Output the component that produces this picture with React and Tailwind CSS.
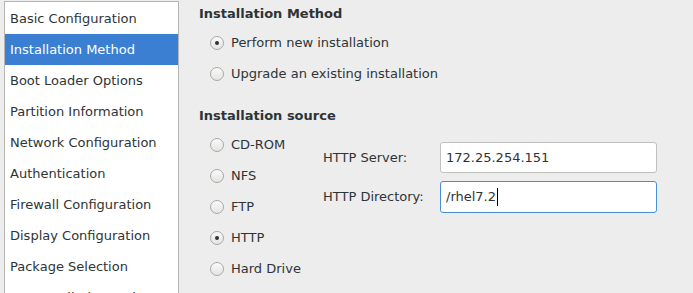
import React, { useState } from 'react';

const sections = [
  'Basic Configuration',
  'Installation Method',
  'Boot Loader Options',
  'Partition Information',
  'Network Configuration',
  'Authentication',
  'Firewall Configuration',
  'Display Configuration',
  'Package Selection',
  'Pre-Installation Script',
];

const sources = ['CD-ROM', 'NFS', 'FTP', 'HTTP', 'Hard Drive'];

const Radio = ({ checked, label, onClick }) => (
  <button onClick={onClick} className="flex items-center h-[31px] text-left">
    <span className="w-[14px] h-[14px] rounded-full border border-[#a8aaa6] bg-gradient-to-b from-[#fafafa] to-[#e4e4e2] flex items-center justify-center">
      {checked && <span className="w-[4px] h-[4px] rounded-full bg-[#2e3436]"></span>}
    </span>
    <span className="ml-[7px]">{label}</span>
  </button>
);

const App = () => {
  const [active, setActive] = useState(1);
  const [method, setMethod] = useState('new');
  const [source, setSource] = useState('HTTP');

  return (
    <div
      className="flex h-[293px] w-[693px] overflow-hidden bg-[#ededed] text-[13px] text-[#2e3436]"
      style={{ fontFamily: '"DejaVu Sans", sans-serif' }}
    >
      <div className="ml-[4px] mt-px w-[175px] h-[320px] shrink-0 self-start border border-[#b6b6b3] bg-white pt-px">
        {sections.map((s, i) => (
          <div
            key={s}
            onClick={() => setActive(i)}
            className={`${
              active === i ? 'bg-[#3a7fd2] text-white' : ''
            } h-[31px] flex items-center pl-[5px] whitespace-nowrap cursor-default`}
          >
            {s}
          </div>
        ))}
      </div>

      <div className="pl-[20px] flex-1">
        <div className="h-[27px] flex items-center font-bold">Installation Method</div>
        <div className="pl-[11px] flex flex-col">
          <Radio checked={method === 'new'} label="Perform new installation" onClick={() => setMethod('new')} />
          <Radio checked={method === 'upgrade'} label="Upgrade an existing installation" onClick={() => setMethod('upgrade')} />
        </div>

        <div className="mt-[14px] h-[26px] flex items-center font-bold">Installation source</div>
        <div className="flex">
          <div className="pl-[11px] w-[124px] flex flex-col">
            {sources.map((s) => (
              <Radio key={s} checked={source === s} label={s} onClick={() => setSource(s)} />
            ))}
          </div>
          <div className="pt-[13px] flex flex-col gap-[8px]">
            <div className="flex items-center">
              <span className="w-[117px]">HTTP Server:</span>
              <input
                defaultValue="172.25.254.151"
                className="w-[217px] h-[31px] px-[5px] rounded-[3px] border border-[#bfc1bd] bg-white outline-none"
              />
            </div>
            <div className="flex items-center">
              <span className="w-[117px]">HTTP Directory:</span>
              <div className="w-[217px] h-[32px] px-[5px] rounded-[3px] border border-[#4a90d9] bg-white flex items-center">
                <span>/rhel7.2</span>
                <span className="w-px h-[18px] bg-black ml-px"></span>
              </div>
            </div>
          </div>
        </div>
      </div>
    </div>
  );
};

export default App;
